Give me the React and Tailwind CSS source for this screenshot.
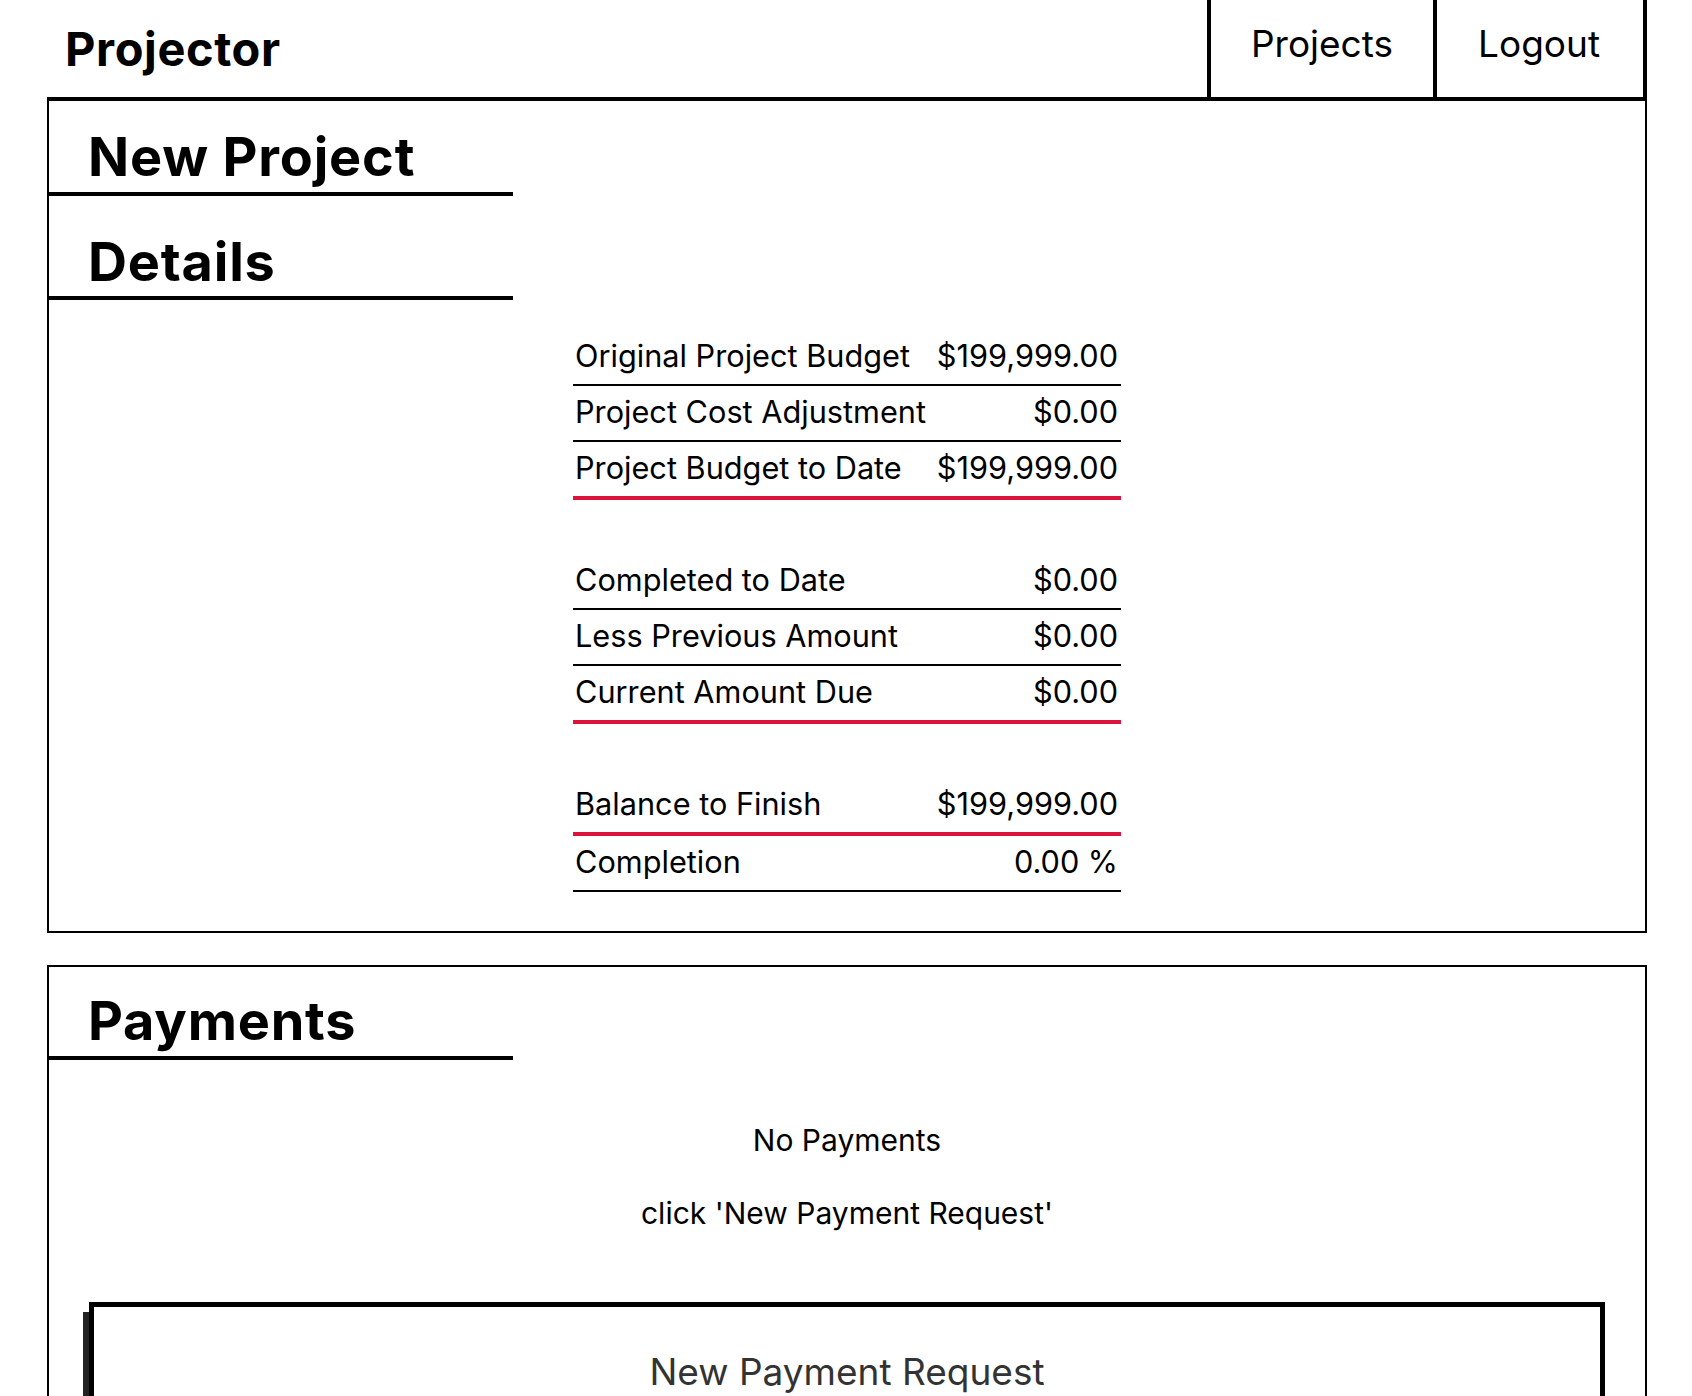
import { useState } from 'react';

const budgetRows = [
  { label: 'Original Project Budget', value: '$199,999.00' },
  { label: 'Project Cost Adjustment', value: '$0.00' },
  { label: 'Project Budget to Date', value: '$199,999.00', total: true },
  { spacer: true },
  { label: 'Completed to Date', value: '$0.00' },
  { label: 'Less Previous Amount', value: '$0.00' },
  { label: 'Current Amount Due', value: '$0.00', total: true },
  { spacer: true },
  { label: 'Balance to Finish', value: '$199,999.00', total: true },
  { label: 'Completion', value: '0.00 %' },
];

const SectionTitle = ({ children, className = '' }) => (
  <h2
    className={`w-[464px] border-b-4 border-black pl-[39px] text-[54px] leading-[64px] font-bold tracking-[0.8px] ${className}`}
  >
    {children}
  </h2>
);

const DetailRow = ({ row }) => {
  if (row.spacer) return <div className="h-[54px]" />;
  return (
    <div
      className={
        row.total
          ? 'flex justify-between pl-[2px] pr-[3px] pt-[8px] pb-[10px] border-b-4 border-[#dc143c]'
          : 'flex justify-between pl-[2px] pr-[3px] pt-[8px] pb-[10px] border-b-2 border-black'
      }
    >
      <span>{row.label}</span>
      <span>{row.value}</span>
    </div>
  );
};

const App = () => {
  const [payments] = useState([]);

  return (
    <div className="min-h-screen bg-white text-black font-['Inter',sans-serif]">
      <div className="ml-[47px] w-[1600px]">
        <header className="flex justify-between h-[101px] border-b-4 border-black">
          <div className="pl-[18px] pt-[21px] text-[47px] leading-[56px] font-bold tracking-[0.6px]">Projector</div>
          <nav className="flex text-[37px] leading-[45px]">
            <a href="#" className="border-l-4 border-black pl-[40px] pr-[40px] pt-[21px]">Projects</a>
            <a href="#" className="border-x-4 border-black pl-[41px] pr-[43px] pt-[21px]">Logout</a>
          </nav>
        </header>

        <section className="border-x-2 border-b-2 border-black pb-[39px]">
          <SectionTitle className="pt-6 pb-[3px]">New Project</SectionTitle>
          <SectionTitle className="pt-[34px] pb-[2px]">Details</SectionTitle>
          <div className="mx-auto mt-[30px] w-[548px] text-[30.7px] leading-[36px]">
            {budgetRows.map((row, i) => (
              <DetailRow key={i} row={row} />
            ))}
          </div>
        </section>

        <section className="mt-8 border-2 border-black pb-10">
          <SectionTitle className="pt-[22px] pb-[3px]">Payments</SectionTitle>
          {payments.length === 0 && (
            <div className="text-center text-[30px] leading-[45px]">
              <p className="mt-[58px]">No Payments</p>
              <p className="mt-[28px]">click 'New Payment Request'</p>
            </div>
          )}
          <button
            type="button"
            className="mx-10 mt-[66px] block w-[calc(100%-80px)] border-[5px] border-black bg-white pt-[42px] pb-[40px] text-center text-[37px] leading-[45px] text-[#333] shadow-[-6px_10px_0_0_#222]"
          >
            New Payment Request
          </button>
        </section>
      </div>
    </div>
  );
};

export default App;
